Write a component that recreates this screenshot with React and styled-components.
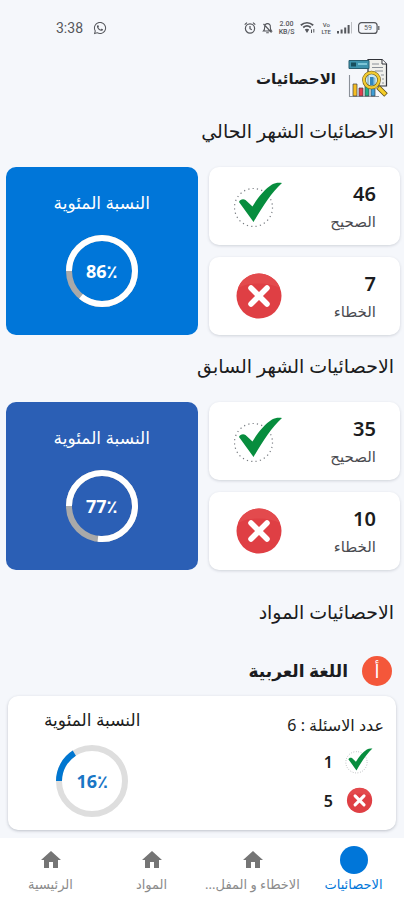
import styled, { createGlobalStyle } from 'styled-components';
import { MdHome } from 'react-icons/md';
import { FaWhatsapp } from 'react-icons/fa';

const GlobalStyle = createGlobalStyle`
  * {
    box-sizing: border-box;
  }

  body {
    margin: 0;
    background: #f5f7fb;
    color: #1b1c20;
    font-family: 'Noto Sans', 'DejaVu Sans', sans-serif;
  }
`;

// ── Data ─────────────────────────────────────────────────────────────────────
const months = [
  { id: 'current', title: 'الاحصائيات الشهر الحالي', correct: 46, wrong: 7, percent: 86, color: '#0076d9' },
  { id: 'previous', title: 'الاحصائيات الشهر السابق', correct: 35, wrong: 10, percent: 77, color: '#2b5fb5' },
];

const subjects = [
  { id: 'arabic', letter: 'أ', name: 'اللغة العربية', total: 6, correct: 1, wrong: 5, percent: 16 },
];

const navItems = [
  { id: 'stats', label: 'الاحصائيات', active: true },
  { id: 'mistakes', label: 'الاخطاء و المفل...' },
  { id: 'subjects', label: 'المواد' },
  { id: 'home', label: 'الرئيسية' },
];

// ── Styled components ────────────────────────────────────────────────────────
const Screen = styled.div`
  display: flex;
  flex-direction: column;
  min-height: 100vh;
`;

const StatusBar = styled.div`
  display: flex;
  align-items: center;
  justify-content: space-between;
  height: 56px;
  padding: 0 24px 0 56px;
  color: #55575c;
`;

const StatusGroup = styled.div`
  display: flex;
  align-items: center;
  gap: 6px;
`;

const Clock = styled.span`
  margin-right: 4px;
  font-family: Roboto, sans-serif;
  font-size: 14px;
  line-height: 16px;
`;

const TinyText = styled.span`
  display: flex;
  flex-direction: column;
  align-items: center;
  font-family: Roboto, sans-serif;
  font-size: ${({ $size }) => $size}px;
  font-weight: 500;
  line-height: ${({ $size }) => $size + 1}px;
`;

const TitleBar = styled.header`
  display: flex;
  align-items: center;
  gap: 12px;
  height: 44px;
  padding: 0 16px;
`;

const PageTitle = styled.h1`
  margin: 0;
  font-size: 15px;
  font-weight: 700;
  line-height: 24px;
`;

const SectionTitle = styled.h2`
  margin: 0;
  padding: 16px 10px 20px;
  font-size: 19px;
  font-weight: 400;
  line-height: 31px;
`;

const MonthGrid = styled.div`
  display: grid;
  grid-template-columns: 1fr 1fr;
  gap: 11px;
  padding: 0 4px 0 6px;
`;

const CountColumn = styled.div`
  display: grid;
  gap: 12px;
`;

const CountCard = styled.div`
  display: flex;
  align-items: center;
  justify-content: space-between;
  height: 78px;
  padding: 2px 24px 0;
  border-radius: 10px;
  background: #fff;
  box-shadow: 0 1px 3px rgba(60, 70, 90, 0.2);
`;

const CountText = styled.div`
  display: flex;
  flex-direction: column;
`;

const CountValue = styled.strong`
  font-size: 20px;
  font-weight: 600;
  line-height: 28px;
`;

const CountLabel = styled.span`
  color: #4a4b50;
  font-size: 15px;
  line-height: 26px;
`;

const PercentCard = styled.div`
  display: flex;
  flex-direction: column;
  align-items: center;
  gap: 20px;
  padding-top: 24px;
  border-radius: 10px;
  background: ${({ $color }) => $color};
  color: #fff;
`;

const PercentTitle = styled.span`
  font-size: 17px;
  line-height: 24px;
`;

const RingBox = styled.div`
  display: grid;
  place-items: center;

  > * {
    grid-area: 1 / 1;
  }
`;

const RingValue = styled.span`
  color: ${({ $color }) => $color};
  font-size: 18px;
  font-weight: 700;
  line-height: 24px;
`;

const SubjectsSection = styled.section`
  margin-top: 11px;
`;

const SubjectHeader = styled.div`
  display: flex;
  align-items: center;
  gap: 14px;
  padding: 8px 12px 10px;
`;

const SubjectBadge = styled.span`
  display: grid;
  place-items: center;
  width: 30px;
  height: 30px;
  border-radius: 50%;
  background: #f4573a;
  color: #fff;
  font-size: 18px;
  line-height: 24px;
`;

const SubjectName = styled.h3`
  margin: 0;
  font-size: 17px;
  font-weight: 700;
  line-height: 24px;
`;

const SubjectCard = styled.article`
  display: flex;
  justify-content: space-between;
  height: 134px;
  margin: 0 8px 8px;
  padding: 12px 12px 0 36px;
  border-radius: 10px;
  background: #fff;
  box-shadow: 0 1px 3px rgba(60, 70, 90, 0.3);
`;

const SubjectDetails = styled.div`
  display: flex;
  flex-direction: column;
`;

const SubjectTotal = styled.span`
  margin: 5px 0;
  font-size: 16px;
  line-height: 24px;
`;

const SubjectLine = styled.div`
  display: flex;
  align-items: center;
  gap: 12px;
  height: 39px;
  padding: 0 11px;
  font-size: 16px;
  font-weight: 600;
`;

const SubjectChart = styled.div`
  display: flex;
  flex-direction: column;
  align-items: center;
  gap: 13px;
`;

const BottomNav = styled.nav`
  display: grid;
  grid-template-columns: repeat(4, 1fr);
  height: 62px;
  margin-top: auto;
  background: #fff;
`;

const NavLink = styled.a`
  display: flex;
  flex-direction: column;
  align-items: center;
  padding-top: 8px;
  color: ${({ $active }) => ($active ? '#0076d9' : '#8b8b8b')};
  font-size: 13px;
  line-height: 20px;
  text-decoration: none;
  white-space: nowrap;

  svg {
    flex: none;
    margin: 2px 0;
    color: #757575;
  }
`;

const ActiveDot = styled.span`
  width: 28px;
  height: 28px;
  border-radius: 50%;
  background: #0076d9;
`;

// ── Icons ────────────────────────────────────────────────────────────────────
const AlarmIcon = () => (
  <svg width="12" height="14" viewBox="0 0 12 14" fill="none" stroke="currentColor" strokeWidth="1.2">
    <circle cx="6" cy="7.5" r="4.6" />
    <path d="M6 5v2.7l1.8 1M.7 3.6 3 1.6M11.3 3.6 9 1.6" />
  </svg>
);

const MutedBellIcon = () => (
  <svg width="11" height="14" viewBox="0 0 11 14" fill="none" stroke="currentColor" strokeWidth="1.1">
    <path d="M1.5 10h8c-1-1-1.2-2-1.2-4A2.8 2.8 0 0 0 5.5 2.6 2.8 2.8 0 0 0 2.7 6c0 2-.2 3-1.2 4ZM4.2 11.8h2.6M1.5 3l8 8.5" />
  </svg>
);

const WifiIcon = () => (
  <svg width="15" height="14" viewBox="0 0 15 14" fill="none" stroke="currentColor" strokeWidth="1.8">
    <path d="M.8 4.2C4.5 1 9.5 1 13.2 4.2M3.2 6.5c2.3-2 5.3-2 7.6 0" />
    <path d="m4.8 8.5 2.2 3.5 2.2-3.5c-1.4-1-3-1-4.4 0Z" fill="currentColor" stroke="none" />
    <path d="M11.5 8.5V12M13.8 8v3.5" strokeWidth="1" />
  </svg>
);

const SignalIcon = () => (
  <svg width="15" height="14" viewBox="0 0 15 14" fill="currentColor">
    <path d="M0 10h2v2.5H0zM3.6 8.5h2v4h-2zM7.2 6.5h2v6h-2zM10.6 4h2v8.5h-2z" />
    <path d="M14 1h1v11.5h-1z" opacity="0.35" />
  </svg>
);

const BatteryIcon = () => (
  <svg width="22" height="12" viewBox="0 0 22 12" fill="none" stroke="currentColor">
    <rect x="0.6" y="0.6" width="18.5" height="10.8" rx="3" strokeWidth="1.2" />
    <path d="M20.8 4v4" strokeWidth="1.2" />
    <text x="10" y="8.4" textAnchor="middle" fontFamily="Roboto" fontSize="7" fill="currentColor" stroke="none">59</text>
  </svg>
);

const StatsIcon = () => (
  <svg width="40" height="40" viewBox="0 0 40 40">
    <path d="M20 1.5h14l4.5 4.5v22H20z" fill="#f0f0ec" stroke="#303238" strokeWidth="1.2" />
    <path d="M34 1.5V6h4.5" fill="#fff" stroke="#303238" />
    <path d="M24 6h7M24 9.5h11M27 13h8M33 17h3M34 21h2M34 25h2" stroke="#8a9098" strokeWidth="1.2" />
    <path d="M1 2.5h20v8H1z" fill="#3d93ad" stroke="#285e70" />
    <path d="M3 4.5h5v4H3z" fill="#174e5d" />
    <path d="M10 6h9" stroke="#9ee0ed" strokeWidth="1.3" />
    <path d="M1.5 17v21.5H31" fill="none" stroke="#8a9098" strokeWidth="1.1" />
    <g stroke="#3d4148" strokeWidth="0.7">
      <path d="M5 26h4v12H5z" fill="#f5bd22" />
      <path d="M11 30h4v8h-4z" fill="#e43d4c" />
      <path d="M17 27h4v11h-4z" fill="#22ae86" />
      <path d="M23 20h4v18h-4z" fill="#3e9ed6" />
    </g>
    <path d="m30 29 8 8" stroke="#5d4c17" strokeWidth="5" />
    <path d="m30.5 29.5 7 7" stroke="#f5cd27" strokeWidth="3.4" />
    <circle cx="23.5" cy="22" r="7.5" fill="#b9e6f5" fillOpacity="0.65" stroke="#6b5716" strokeWidth="3.6" />
    <circle cx="23.5" cy="22" r="7.5" fill="none" stroke="#f2cb31" strokeWidth="2.4" />
    <path d="M22 19h3.5v8H22z" fill="#3186bd" />
  </svg>
);

const CheckIcon = ({ size = 50 }) => (
  <svg width={size} height={size} viewBox="0 0 50 50">
    <circle cx="20.5" cy="25.5" r="19" fill="none" stroke="#777b80" strokeWidth="1.2" strokeDasharray="1.2 3.2" />
    <path d="M6 20c1-2.5 4-3.5 6.5-2l7 6.5C25 15 32 7 39 2.5c3-1.7 6.500-2 10-1.500C38.500 10.500 30 24 20.500 40Z" fill="#078d3e" />
  </svg>
);

const CrossIcon = ({ size = 50 }) => (
  <svg width={size} height={size} viewBox="0 0 50 50">
    <circle cx="26" cy="24" r="22.5" fill="#df3f44" />
    <path d="M5 16a22.5 22.5 0 0 1 42 0C35.5 10 16.5 10 5 16Z" fill="#e34a4d" />
    <path d="m18 16 16 16M34 16 18 32" stroke="#fff" strokeWidth="5.5" strokeLinecap="round" />
  </svg>
);

// ── Pieces ───────────────────────────────────────────────────────────────────
// The progress starts at nine o'clock and runs clockwise
const Ring = ({ percent, track, bar, color }) => (
  <RingBox>
    <svg width="72" height="72" viewBox="0 0 72 72" fill="none" strokeWidth="6">
      <circle cx="36" cy="36" r="33" stroke={track} />
      <circle
        cx="36"
        cy="36"
        r="33"
        stroke={bar}
        pathLength="100"
        strokeDasharray={`${percent} 100`}
        transform="rotate(180 36 36)"
      />
    </svg>
    <RingValue dir="ltr" $color={color}>{percent}٪</RingValue>
  </RingBox>
);

const Count = ({ value, label, icon }) => (
  <CountCard>
    <CountText>
      <CountValue>{value}</CountValue>
      <CountLabel>{label}</CountLabel>
    </CountText>
    {icon}
  </CountCard>
);

const MonthSection = ({ month }) => (
  <section>
    <SectionTitle>{month.title}</SectionTitle>
    <MonthGrid>
      <CountColumn>
        <Count value={month.correct} label="الصحيح" icon={<CheckIcon />} />
        <Count value={month.wrong} label="الخطاء" icon={<CrossIcon />} />
      </CountColumn>
      <PercentCard $color={month.color}>
        <PercentTitle>النسبة المئوية</PercentTitle>
        <Ring percent={month.percent} track="#a9a9a9" bar="#fff" color="#fff" />
      </PercentCard>
    </MonthGrid>
  </section>
);

const Subject = ({ subject }) => (
  <>
    <SubjectHeader>
      <SubjectBadge>{subject.letter}</SubjectBadge>
      <SubjectName>{subject.name}</SubjectName>
    </SubjectHeader>
    <SubjectCard>
      <SubjectDetails>
        <SubjectTotal>عدد الاسئلة : {subject.total}</SubjectTotal>
        <SubjectLine>
          <CheckIcon size={28} />
          {subject.correct}
        </SubjectLine>
        <SubjectLine>
          <CrossIcon size={28} />
          {subject.wrong}
        </SubjectLine>
      </SubjectDetails>
      <SubjectChart>
        <PercentTitle>النسبة المئوية</PercentTitle>
        <Ring percent={subject.percent} track="#dedede" bar="#0076d0" color="#1976c5" />
      </SubjectChart>
    </SubjectCard>
  </>
);

const App = () => {
  return (
    <Screen dir="rtl" lang="ar">
      <GlobalStyle />
      <StatusBar dir="ltr">
        <StatusGroup>
          <Clock>3:38</Clock>
          <FaWhatsapp size={14} />
        </StatusGroup>
        <StatusGroup>
          <AlarmIcon />
          <MutedBellIcon />
          <TinyText $size={7}>
            <span>2.00</span>
            <span>KB/S</span>
          </TinyText>
          <WifiIcon />
          <TinyText $size={6}>
            <span>Vo</span>
            <span>LTE</span>
          </TinyText>
          <SignalIcon />
          <BatteryIcon />
        </StatusGroup>
      </StatusBar>

      <TitleBar>
        <StatsIcon />
        <PageTitle>الاحصائيات</PageTitle>
      </TitleBar>

      <main>
        {months.map((month) => (
          <MonthSection key={month.id} month={month} />
        ))}
        <SubjectsSection>
          <SectionTitle>الاحصائيات المواد</SectionTitle>
          {subjects.map((subject) => (
            <Subject key={subject.id} subject={subject} />
          ))}
        </SubjectsSection>
      </main>

      <BottomNav>
        {navItems.map((item) => (
          <NavLink key={item.id} href={`#${item.id}`} $active={item.active}>
            {item.active ? <ActiveDot /> : <MdHome size={24} />}
            {item.label}
          </NavLink>
        ))}
      </BottomNav>
    </Screen>
  );
};

export default App;
